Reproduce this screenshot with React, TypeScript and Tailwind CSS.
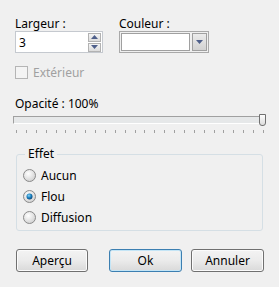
import React from "react";

const font = { fontFamily: '"Noto Sans", "Open Sans", sans-serif' };

const Arrow = ({ up }: { up?: boolean }) => (
  <svg width="7" height="4" viewBox="0 0 7 4">
    <path d={up ? "M0 4 L3.5 0 L7 4 Z" : "M0 0 L7 0 L3.5 4 Z"} fill="#4e5f8a" />
  </svg>
);

const Radio = ({ checked }: { checked?: boolean }) => (
  <svg width="13" height="13" viewBox="0 0 13 13">
    <defs>
      <radialGradient id="rg" cx="40%" cy="35%" r="70%">
        <stop offset="0" stopColor="#ffffff" />
        <stop offset="1" stopColor="#cfcfcf" />
      </radialGradient>
      <radialGradient id="dot" cx="40%" cy="35%" r="70%">
        <stop offset="0" stopColor="#8fd3f5" />
        <stop offset="0.5" stopColor="#1b84c3" />
        <stop offset="1" stopColor="#0b3f70" />
      </radialGradient>
    </defs>
    <circle cx="6.5" cy="6.5" r="6" fill="url(#rg)" stroke="#8a8a8a" />
    {checked && <circle cx="6.5" cy="6.5" r="3" fill="url(#dot)" />}
  </svg>
);

const Button = ({ label, primary }: { label: string; primary?: boolean }) => (
  <div
    className={`h-[23px] w-[73px] rounded-[3px] border flex items-center justify-center text-[12px] text-black bg-gradient-to-b from-[#f3f3f3] via-[#ebebeb] to-[#d9d9d9] ${
      primary ? "border-[#3c7fb1] shadow-[inset_0_0_0_1px_#c4e5f6]" : "border-[#707070] shadow-[inset_0_0_0_1px_#fbfbfb]"
    }`}
  >
    {label}
  </div>
);

export default function App() {
  const ticks = Array.from({ length: 26 });
  return (
    <div className="w-[279px] h-[287px] bg-[#f0f0f0] text-[12px] leading-[15px] text-black" style={font}>
      <div className="flex gap-4 pl-[15px] pt-[16px]">
        <div className="flex flex-col">
          <span className="h-[15px]">Largeur :</span>
          <div className="w-[88px] h-[22px] bg-white border border-[#c5c9cf] flex items-center justify-between pl-[3px] pr-[1px]">
            <span>3</span>
            <div className="flex flex-col gap-[1px]">
              <div className="w-[13px] h-[9px] border border-[#b2b2b2] bg-gradient-to-b from-[#f4f4f4] to-[#dcdcdc] flex items-center justify-center">
                <Arrow up />
              </div>
              <div className="w-[13px] h-[9px] border border-[#b2b2b2] bg-gradient-to-b from-[#f4f4f4] to-[#dcdcdc] flex items-center justify-center">
                <Arrow />
              </div>
            </div>
          </div>
        </div>
        <div className="flex flex-col">
          <span className="h-[15px]">Couleur :</span>
          <div className="w-[90px] h-[22px] border border-[#a9a9a9] bg-[#f0f0f0] flex items-center gap-[2px] px-[1px]">
            <div className="w-[69px] h-[18px] bg-white border border-[#a0a0a0]" />
            <div className="w-[15px] h-[18px] border border-[#a0a0a0] bg-gradient-to-b from-[#ececec] to-[#d2d2d2] flex items-center justify-center">
              <Arrow />
            </div>
          </div>
        </div>
      </div>

      <div className="flex items-center gap-[5px] pl-[15px] mt-[12px]">
        <div className="w-[13px] h-[13px] border border-[#b5b5b5] bg-[#f4f4f4]" />
        <span className="text-[#a0a0a0]">Extérieur</span>
      </div>

      <div className="pl-[15px] mt-[16px]">Opacité : 100%</div>

      <div className="mx-[13px] mt-[5px] relative">
        <div className="h-[8px] bg-[#e6e8e9] border-t border-l border-[#a0a0a0] border-b border-b-white" />
        <div className="absolute right-0 top-[-2px] w-[7px] h-[12px] rounded-b-[3px] border border-[#707070] bg-gradient-to-b from-[#fdfdfd] to-[#dcdcdc]" />
        <div className="flex justify-between pl-[3px] pr-[2px] mt-[6px]">
          {ticks.map((_, i) => (
            <div key={i} className="w-[1px] h-[3px] bg-[#a0a0a0]" />
          ))}
        </div>
      </div>

      <div className="relative mx-[16px] mt-[21px] h-[77px] border border-[#d5dfe5] rounded-[3px]">
        <span className="absolute left-[8px] top-[-9px] px-[3px] bg-[#f0f0f0]">Effet</span>
        <div className="flex flex-col gap-[6px] pl-[6px] pt-[13px]">
          {[
            ["Aucun", false],
            ["Flou", true],
            ["Diffusion", false],
          ].map(([label, checked]) => (
            <div key={label as string} className="flex items-center gap-[5px] h-[15px]">
              <Radio checked={checked as boolean} />
              <span>{label as string}</span>
            </div>
          ))}
        </div>
      </div>

      <div className="flex mt-[18px] pl-[16px] pr-[15px]">
        <Button label="Aperçu" />
        <div className="ml-[21px]">
          <Button label="Ok" primary />
        </div>
        <div className="ml-[9px]">
          <Button label="Annuler" />
        </div>
      </div>
    </div>
  );
}
